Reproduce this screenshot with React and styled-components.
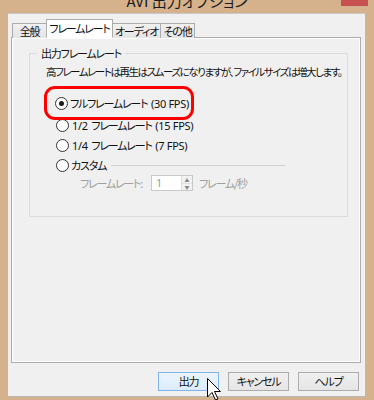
import styled, { createGlobalStyle } from 'styled-components';

const GlobalStyle = createGlobalStyle`
  html, body {
    margin: 0;
    padding: 0;
    background: #d5b18c;
  }
  body {
    font-family: "Noto Sans CJK JP", "Noto Sans", sans-serif;
    font-size: 11px;
    letter-spacing: -1.2px;
    font-feature-settings: "palt";
    color: #111;
  }
`

const Window = styled.div`
  width: 374px;
  height: 400px;
  background: #d5b18c;
  display: flex;
  flex-direction: column;
  overflow: hidden;
  position: relative;
`

const TitleBar = styled.div`
  height: 13px;
  display: grid;
  grid-template-columns: 1fr auto 1fr;
  align-items: start;
  overflow: hidden;
`

const TitleText = styled.div`
  grid-column: 2;
  font-size: 15px;
  line-height: 15px;
  margin-top: -7px;
  color: #1a1a1a;
  letter-spacing: 0;
`

const CloseButton = styled.div`
  grid-column: 3;
  justify-self: end;
  width: 27px;
  height: 6px;
  margin-right: 6px;
  background: #c75050;
`

const Client = styled.div`
  flex: 1;
  margin: 0 8px 3px 7px;
  background: #f0f0f0;
  border: 1px solid #b8b8b8;
  border-top-color: #c8c8c8;
  display: flex;
  flex-direction: column;
  padding: 5px 4px 0 3px;
`

const TabStrip = styled.div`
  display: flex;
  align-items: flex-end;
  height: 19px;
  padding-left: 2px;
  position: relative;
  z-index: 1;
`

const Tab = styled.div`
  width: ${({ $w }) => $w}px;
  height: ${({ $active }) => ($active ? '19px' : '15px')};
  box-sizing: border-box;
  border: 1px solid #acacac;
  border-bottom: ${({ $active }) => ($active ? '1px solid #fff' : 'none')};
  margin-left: -1px;
  background: ${({ $active }) => ($active ? '#fff' : 'linear-gradient(#f0f0f0, #e5e5e5)')};
  line-height: ${({ $active }) => ($active ? '16px' : '14px')};
  text-align: center;
  white-space: nowrap;
  z-index: ${({ $active }) => ($active ? 2 : 1)};
`

const Panel = styled.div`
  height: 326px;
  margin-top: -1px;
  box-sizing: border-box;
  border: 1px solid #acacac;
  background: #f0f0f0;
  box-shadow: inset 0 0 0 1px #fdfdfd;
  padding: 8px 12px 0 17px;
`

const Group = styled.fieldset`
  margin: 0;
  height: 171px;
  box-sizing: border-box;
  border: 1px solid #dcdcdc;
  padding: 0 0 0 16px;
`

const Legend = styled.legend`
  padding: 0 4px;
  margin-left: -9px;
  line-height: 14px;
`

const Hint = styled.div`
  margin: 5px 0 0 0;
  line-height: 14px;
  white-space: nowrap;
  font-size: 10.5px;
  letter-spacing: -1.45px;
`

const Highlight = styled.div`
  position: relative;
  z-index: 1;
  width: 150px;
  height: 34px;
  box-sizing: border-box;
  margin: 7px 0 0 -2px;
  border: 3px solid #ff0000;
  border-radius: 11px;
  display: flex;
  align-items: center;
  padding-left: 8px;
`

const Option = styled.label`
  display: flex;
  align-items: center;
  gap: 2px;
  height: 20px;
  white-space: nowrap;
  margin-left: ${({ $indent }) => $indent || 0}px;
`

const Latin = styled.span`
  font-family: "Noto Sans", sans-serif;
  letter-spacing: -0.3px;
  margin: 0 1px;
`

const RadioMark = styled.span`
  width: 11px;
  height: 11px;
  border-radius: 50%;
  border: 1px solid #333;
  background: #fff;
  display: inline-flex;
  align-items: center;
  justify-content: center;
  flex: none;

  &::after {
    content: '';
    width: 5px;
    height: 5px;
    border-radius: 50%;
    background: ${({ $checked }) => ($checked ? '#1a1a1a' : 'transparent')};
  }
`

const OptionList = styled.div`
  display: flex;
  flex-direction: column;
  margin-top: -5px;
`

const Rule = styled.div`
  flex: 1;
  height: 1px;
  background: #d0d0d0;
  margin: 0 62px 0 3px;
  align-self: center;
`

const RateRow = styled.div`
  display: flex;
  align-items: center;
  margin: 1px 0 0 34px;
  height: 14px;
  color: #a0a0a0;
`

const DimLabel = styled.span`
  width: 71px;
`

const SpinBox = styled.div`
  width: 40px;
  height: 14px;
  border: 1px solid #c8c8c8;
  background: #fff;
  display: flex;
  margin-right: 6px;
`

const SpinValue = styled.span`
  flex: 1;
  padding-left: 4px;
  line-height: 14px;
  color: #9a9a9a;
  font-family: "Noto Sans", sans-serif;
  letter-spacing: 0;
`

const SpinArrows = styled.div`
  width: 10px;
  display: flex;
  flex-direction: column;
  border-left: 1px solid #e0e0e0;
`

const SpinArrow = styled.div`
  flex: 1;
  background: #f2f2f2;
  display: flex;
  align-items: center;
  justify-content: center;
  font-size: 5px;
  letter-spacing: 0;
  color: #8a8a8a;
  line-height: 1;
  & + & { border-top: 1px solid #e0e0e0; }
`

const ButtonRow = styled.div`
  display: flex;
  justify-content: flex-end;
  gap: 9px;
  margin-top: 9px;
  padding-right: 2px;
`

const Button = styled.div`
  width: 61px;
  height: 19px;
  box-sizing: border-box;
  border: 1px solid ${({ $hot }) => ($hot ? '#7eb4ea' : '#acacac')};
  background: ${({ $hot }) => ($hot ? 'linear-gradient(#ecf4fc, #dcecfc)' : 'linear-gradient(#f0f0f0, #e5e5e5)')};
  display: flex;
  align-items: center;
  justify-content: center;
  line-height: 1;
`

const Cursor = styled.svg`
  position: absolute;
  left: 206px;
  top: 377px;
`

export default function App() {
  return (
    <Window>
      <GlobalStyle />
      <TitleBar>
        <TitleText>AVI 出力オプション</TitleText>
        <CloseButton />
      </TitleBar>
      <Client>
        <TabStrip>
          <Tab $w={35}>全般</Tab>
          <Tab $w={67} $active>フレームレート</Tab>
          <Tab $w={49}>オーディオ</Tab>
          <Tab $w={35}>その他</Tab>
        </TabStrip>
        <Panel>
          <Group>
            <Legend>出力フレームレート</Legend>
            <Hint>高フレームレートは再生はスムーズになりますが、ファイルサイズは増大します。</Hint>
            <Highlight>
              <Option>
                <RadioMark $checked />
                <span>フルフレームレート<Latin> (30 FPS)</Latin></span>
              </Option>
            </Highlight>
            <OptionList>
              <Option $indent={10}>
                <RadioMark />
                <span><Latin>1/2 </Latin>フレームレート<Latin> (15 FPS)</Latin></span>
              </Option>
              <Option $indent={10}>
                <RadioMark />
                <span><Latin>1/4 </Latin>フレームレート<Latin> (7 FPS)</Latin></span>
              </Option>
              <Option $indent={10}>
                <RadioMark />
                カスタム
                <Rule />
              </Option>
            </OptionList>
            <RateRow>
              <DimLabel>フレームレート:</DimLabel>
              <SpinBox>
                <SpinValue>1</SpinValue>
                <SpinArrows>
                  <SpinArrow>▲</SpinArrow>
                  <SpinArrow>▼</SpinArrow>
                </SpinArrows>
              </SpinBox>
              <span>フレーム/秒</span>
            </RateRow>
          </Group>
        </Panel>
        <ButtonRow>
          <Button $hot>出力</Button>
          <Button>キャンセル</Button>
          <Button>ヘルプ</Button>
        </ButtonRow>
      </Client>
      <Cursor width="17" height="24" viewBox="0 0 17 24">
        <path d="M1.5 1.5 L1.5 20 L6 15.5 L9.5 23 L12 22 L8.5 14.5 L14.5 14.5 Z" fill="#fff" stroke="#000" strokeWidth="1" strokeLinejoin="round" />
      </Cursor>
    </Window>
  );
}
